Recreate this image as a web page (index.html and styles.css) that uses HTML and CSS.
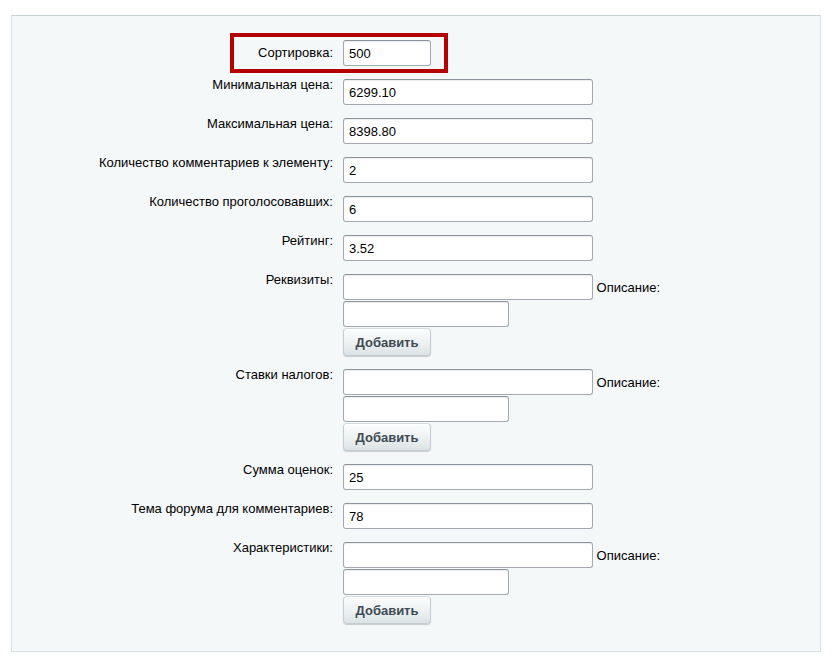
FILE: index.html
```html
<!DOCTYPE html>
<html lang="ru">
<head>
<meta charset="utf-8">
<link rel="stylesheet" href="styles.css">
</head>
<body>
<div class="panel">
  <div class="highlight"></div>

  <div class="row row-middle">
    <div class="label">Сортировка:</div>
    <div class="field"><input class="inp inp-short" type="text" value="500"></div>
  </div>

  <div class="row">
    <div class="label">Минимальная цена:</div>
    <div class="field"><input class="inp" type="text" value="6299.10"></div>
  </div>

  <div class="row">
    <div class="label">Максимальная цена:</div>
    <div class="field"><input class="inp" type="text" value="8398.80"></div>
  </div>

  <div class="row">
    <div class="label">Количество комментариев к элементу:</div>
    <div class="field"><input class="inp" type="text" value="2"></div>
  </div>

  <div class="row">
    <div class="label">Количество проголосовавших:</div>
    <div class="field"><input class="inp" type="text" value="6"></div>
  </div>

  <div class="row">
    <div class="label">Рейтинг:</div>
    <div class="field"><input class="inp" type="text" value="3.52"></div>
  </div>

  <div class="row">
    <div class="label">Реквизиты:</div>
    <div class="field">
      <div class="line"><input class="inp" type="text" value=""> Описание:</div>
      <div class="line"><input class="inp inp-desc" type="text" value=""></div>
      <div class="line"><button class="btn" type="button">Добавить</button></div>
    </div>
  </div>

  <div class="row">
    <div class="label">Ставки налогов:</div>
    <div class="field">
      <div class="line"><input class="inp" type="text" value=""> Описание:</div>
      <div class="line"><input class="inp inp-desc" type="text" value=""></div>
      <div class="line"><button class="btn" type="button">Добавить</button></div>
    </div>
  </div>

  <div class="row">
    <div class="label">Сумма оценок:</div>
    <div class="field"><input class="inp" type="text" value="25"></div>
  </div>

  <div class="row">
    <div class="label">Тема форума для комментариев:</div>
    <div class="field"><input class="inp" type="text" value="78"></div>
  </div>

  <div class="row">
    <div class="label">Характеристики:</div>
    <div class="field">
      <div class="line"><input class="inp" type="text" value=""> Описание:</div>
      <div class="line"><input class="inp inp-desc" type="text" value=""></div>
      <div class="line"><button class="btn" type="button">Добавить</button></div>
    </div>
  </div>
</div>
</body>
</html>
```

FILE: styles.css
```css
html, body {
  margin: 0;
  padding: 0;
  background: #ffffff;
}
body {
  padding: 15px 12px 0 11px;
  font-family: "Liberation Sans", Arial, sans-serif;
  font-size: 13px;
  color: #000;
}
.panel {
  position: relative;
  width: 808px;
  background: #f5f8f9;
  border: 1px solid #d6dfe3;
  border-top-color: #c8d0d4;
  padding: 22px 0 27px 0;
}
.highlight {
  position: absolute;
  left: 218px;
  top: 17px;
  width: 210px;
  height: 32px;
  border: 4px solid #b50000;
  pointer-events: none;
}
.row {
  display: grid;
  grid-template-columns: 325px 1fr;
  column-gap: 6px;
  align-items: start;
  margin-bottom: 11px;
}
.row:last-child {
  margin-bottom: 0;
}
.label {
  text-align: right;
  padding-right: 4px;
  line-height: 16px;
  white-space: nowrap;
}
.row-middle {
  align-items: center;
}
.row-middle .label {
  padding-top: 2px;
}
.field {
  padding-top: 2px;
  line-height: 16px;
}
.line + .line {
  margin-top: 1px;
}
.inp {
  box-sizing: border-box;
  width: 250px;
  height: 26px;
  margin: 0;
  padding: 0 5px;
  border: 1px solid #a4a9b0;
  border-top-color: #8e949b;
  border-radius: 3px;
  background: #fff;
  box-shadow: inset 0 1px 1px rgba(0,0,0,0.08);
  font-family: "Liberation Sans", Arial, sans-serif;
  font-size: 13px;
  color: #000;
  vertical-align: baseline;
  outline: none;
}
.inp-short {
  width: 88px;
}
.inp-desc {
  width: 166px;
}
.btn {
  box-sizing: border-box;
  width: 88px;
  height: 28px;
  margin: 0;
  padding: 0;
  border: 1px solid #c3ccd0;
  border-top-color: #d4dbde;
  border-radius: 4px;
  background: linear-gradient(to bottom, #fcfdfd 0%, #eef2f3 50%, #dbe3e6 100%);
  box-shadow: 0 1px 1px rgba(0,0,0,0.18), inset 0 1px 0 #ffffff;
  font-family: "Liberation Sans", Arial, sans-serif;
  font-size: 13px;
  font-weight: bold;
  color: #3f4b54;
  cursor: pointer;
}
```
